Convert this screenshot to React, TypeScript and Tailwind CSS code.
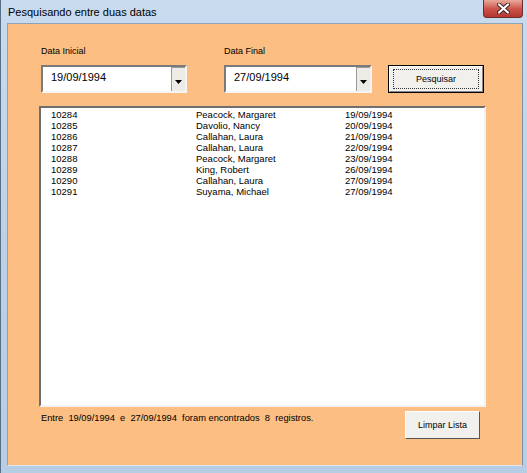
const rows = [
  { id: "10284", name: "Peacock, Margaret", date: "19/09/1994" },
  { id: "10285", name: "Davolio, Nancy", date: "20/09/1994" },
  { id: "10286", name: "Callahan, Laura", date: "21/09/1994" },
  { id: "10287", name: "Callahan, Laura", date: "22/09/1994" },
  { id: "10288", name: "Peacock, Margaret", date: "23/09/1994" },
  { id: "10289", name: "King, Robert", date: "26/09/1994" },
  { id: "10290", name: "Callahan, Laura", date: "27/09/1994" },
  { id: "10291", name: "Suyama, Michael", date: "27/09/1994" },
];

function CloseButton() {
  return (
    <div className="mr-[4px] flex h-[18px] w-[40px] items-center justify-center rounded-b-[4px] border border-t-0 border-[#6d2b2b] bg-gradient-to-b from-[#e8aa9e] via-[#cc564c] to-[#b5362e]">
      <svg width="13" height="11" viewBox="0 0 13 11">
        <path d="M2 1.5 L11 9.5 M11 1.5 L2 9.5" stroke="#3a2020" strokeWidth="4" strokeLinecap="round" />
        <path d="M2 1.5 L11 9.5 M11 1.5 L2 9.5" stroke="#ffffff" strokeWidth="2.2" strokeLinecap="round" />
      </svg>
    </div>
  );
}

function DateCombo({ value, width }: { value: string; width: string }) {
  return (
    <div
      className={`flex h-[28px] ${width} border-2 border-t-[#7a7a7a] border-l-[#7a7a7a] border-b-[#f4f4f4] border-r-[#f4f4f4] bg-white`}
    >
      <div className="flex-1 pl-[8px] pt-[3px] text-[11px] leading-[14px] text-black">{value}</div>
      <div className="flex w-[14px] items-center justify-center border-l border-t border-[#9a9a9a] bg-[#ecebe6] pt-[4px]">
        <svg width="7" height="4" viewBox="0 0 7 4">
          <path d="M0 0 L7 0 L3.5 4 Z" fill="#000" />
        </svg>
      </div>
    </div>
  );
}

export default function App() {
  return (
    <div
      className="h-[473px] w-[527px] overflow-hidden border-l border-[#5a6f86] bg-gradient-to-b from-[#c9dbee] via-[#bcd1e8] to-[#b6cde6]"
      style={{ fontFamily: '"Liberation Sans", Arial, sans-serif' }}
    >
      <div className="flex h-[23px] items-start justify-between">
        <div className="pl-[7px] pt-[5px] text-[11px] leading-[14px] text-black">
          Pesquisando entre duas datas
        </div>
        <CloseButton />
      </div>
      <div className="ml-[6px] h-[443px] w-[516px] border border-t-[#8fa3b8] border-l-[#8fa3b8] border-b-[#dde8f3] border-r-[#7f8fa0] bg-[#fcbe82] pt-[21px]">
        <div className="flex items-end">
          <div className="ml-[33px]">
            <div className="mb-[8px] text-[9px] leading-[12px] text-black">Data Inicial</div>
            <DateCombo value="19/09/1994" width="w-[146px]" />
          </div>
          <div className="ml-[37px]">
            <div className="mb-[8px] text-[9px] leading-[12px] text-black">Data Final</div>
            <DateCombo value="27/09/1994" width="w-[148px]" />
          </div>
          <button className="ml-[16px] h-[28px] w-[96px] border border-black bg-[#f1f0ec] p-0">
            <div className="flex h-full w-full items-center justify-center border border-t-white border-l-white border-b-[#8a8a8a] border-r-[#8a8a8a]">
              <div className="flex h-[20px] w-[86px] items-center justify-center border border-dotted border-[#333] text-[9px] leading-[12px] text-black">
                Pesquisar
              </div>
            </div>
          </button>
        </div>

        <div className="ml-[31px] mt-[13px] h-[301px] w-[447px] border-2 border-t-[#6e6e6e] border-l-[#6e6e6e] border-b-[#f2f2f2] border-r-[#f2f2f2] bg-white pl-[10px] pt-[1px]">
          {rows.map((r) => (
            <div key={r.id} className="flex text-[9.5px] leading-[11px] text-black">
              <div className="w-[145px]">{r.id}</div>
              <div className="w-[149px]">{r.name}</div>
              <div>{r.date}</div>
            </div>
          ))}
        </div>

        <div className="mt-[4px] flex items-start">
          <div className="ml-[33px] mt-[1px] whitespace-pre text-[9.3px] leading-[12px] text-black">
            {"Entre  19/09/1994  e  27/09/1994  foram encontrados  8  registros."}
          </div>
          <button className="ml-auto mr-[42px] h-[28px] w-[75px] border border-t-white border-l-white border-b-[#555] border-r-[#555] bg-[#f1f0ec] p-0 text-[9px] leading-[12px] text-black">
            Limpar Lista
          </button>
        </div>
      </div>
    </div>
  );
}
